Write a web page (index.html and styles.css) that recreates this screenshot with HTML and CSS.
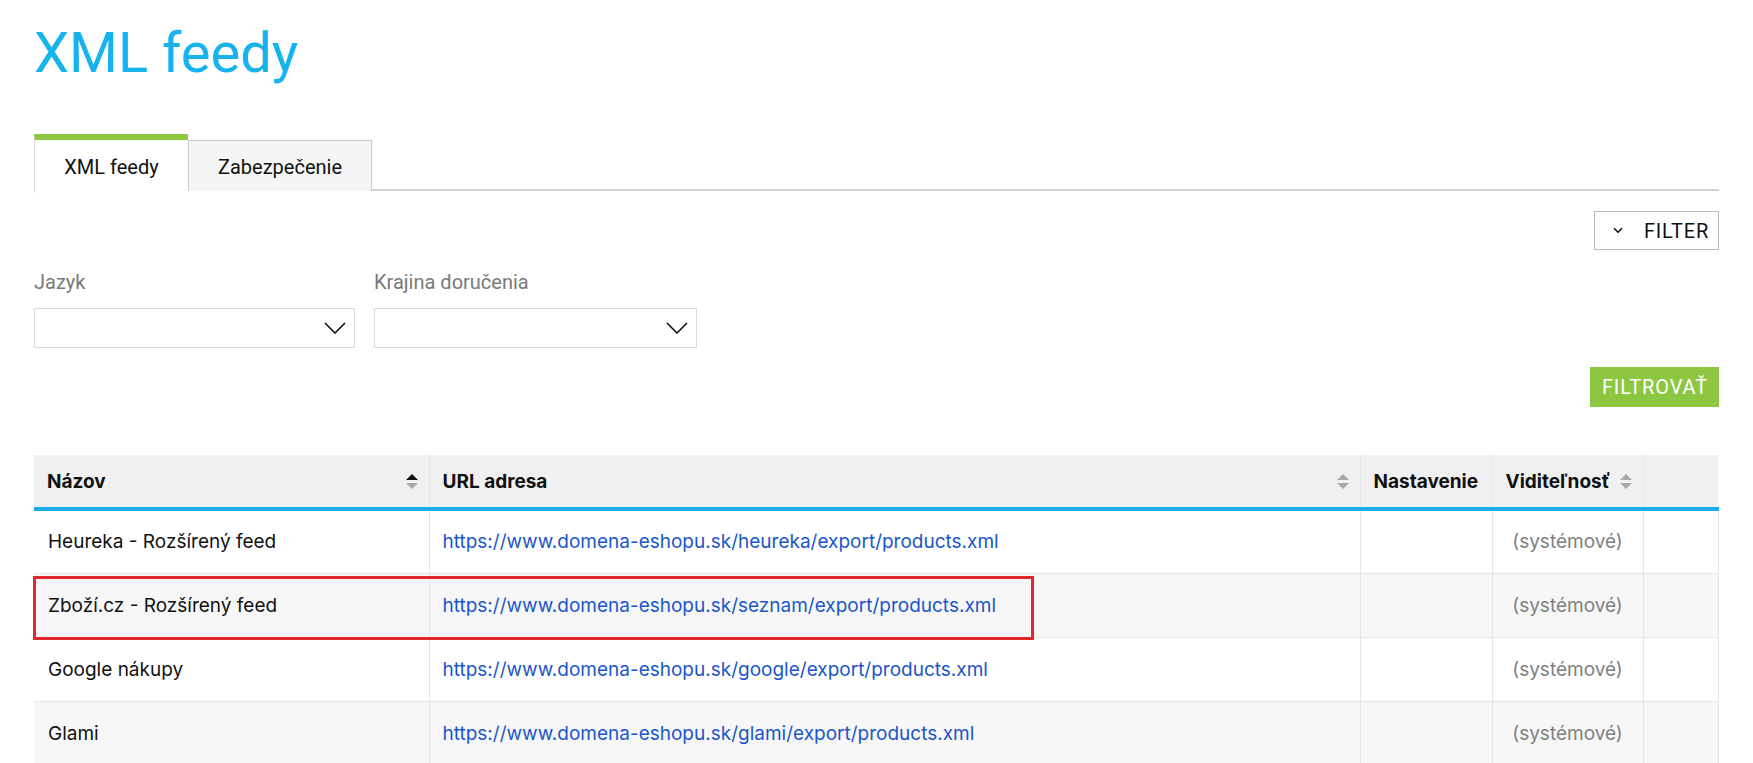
FILE: index.html
```html
<!DOCTYPE html>
<html lang="sk">
<head>
<meta charset="utf-8">
<title>XML feedy</title>
<link rel="stylesheet" href="styles.css">
</head>
<body>
<div class="page">
  <h1 class="title">XML feedy</h1>

  <div class="tabs">
    <div class="tab tab-active">XML feedy</div>
    <div class="tab">Zabezpečenie</div>
  </div>

  <div class="filter-toggle-row">
    <button class="filter-toggle">
      <svg class="filter-chev" width="10" height="7" viewBox="0 0 10 7"><path d="M1 1.2 L5 5.2 L9 1.2" fill="none" stroke="#111" stroke-width="1.6"/></svg>
      <span>FILTER</span>
    </button>
  </div>

  <div class="filters">
    <div class="field">
      <div class="field-label">Jazyk</div>
      <div class="select">
        <svg class="select-chev" width="22" height="12" viewBox="0 0 22 12"><path d="M1 1 L11 11 L21 1" fill="none" stroke="#111" stroke-width="1.6"/></svg>
      </div>
    </div>
    <div class="field">
      <div class="field-label">Krajina doručenia</div>
      <div class="select">
        <svg class="select-chev" width="22" height="12" viewBox="0 0 22 12"><path d="M1 1 L11 11 L21 1" fill="none" stroke="#111" stroke-width="1.6"/></svg>
      </div>
    </div>
  </div>

  <div class="apply-row">
    <button class="apply">FILTROVAŤ</button>
  </div>

  <div class="table-wrap">
    <table class="grid">
      <colgroup>
        <col class="c-name">
        <col class="c-url">
        <col class="c-set">
        <col class="c-vis">
        <col class="c-act">
      </colgroup>
      <thead>
        <tr>
          <th><div class="th-inner"><span>Názov</span><span class="sort sort-asc"><i class="up"></i><i class="down"></i></span></div></th>
          <th><div class="th-inner"><span>URL adresa</span><span class="sort"><i class="up"></i><i class="down"></i></span></div></th>
          <th><div class="th-inner"><span>Nastavenie</span></div></th>
          <th><div class="th-inner"><span>Viditeľnosť</span><span class="sort"><i class="up"></i><i class="down"></i></span></div></th>
          <th></th>
        </tr>
      </thead>
      <tbody>
        <tr>
          <td>Heureka - Rozšírený feed</td>
          <td><a class="link" href="#">https://www.domena-eshopu.sk/heureka/export/products.xml</a></td>
          <td></td>
          <td class="vis">(systémové)</td>
          <td></td>
        </tr>
        <tr>
          <td>Zboží.cz - Rozšírený feed</td>
          <td><a class="link" href="#">https://www.domena-eshopu.sk/seznam/export/products.xml</a></td>
          <td></td>
          <td class="vis">(systémové)</td>
          <td></td>
        </tr>
        <tr>
          <td>Google nákupy</td>
          <td><a class="link" href="#">https://www.domena-eshopu.sk/google/export/products.xml</a></td>
          <td></td>
          <td class="vis">(systémové)</td>
          <td></td>
        </tr>
        <tr>
          <td>Glami</td>
          <td><a class="link" href="#">https://www.domena-eshopu.sk/glami/export/products.xml</a></td>
          <td></td>
          <td class="vis">(systémové)</td>
          <td></td>
        </tr>
      </tbody>
    </table>
    <div class="highlight"></div>
  </div>
</div>
</body>
</html>
```
FILE: styles.css
```css
* { box-sizing: border-box; }
html, body { margin: 0; padding: 0; background: #fff; }
body {
  font-family: Inter, "Noto Sans", sans-serif;
  color: #111;
  overflow: hidden;
}
.page {
  padding: 0 34px 0 34px;
}
.title {
  margin: 0;
  padding-top: 25px;
  font-family: Roboto, sans-serif;
  font-weight: 400;
  font-size: 56px;
  line-height: 56px;
  color: #17b3ef;
}
.tabs {
  display: flex;
  margin-top: 53px;
  border-bottom: 2px solid #d2d2d2;
  height: 57px;
}
.tab {
  font-family: Roboto, sans-serif;
  font-size: 20px;
  line-height: 20px;
  display: flex;
  align-items: center;
  justify-content: center;
  margin-top: 6px;
  height: 51px;
  margin-bottom: -2px;
  background: #f5f5f5;
  border: 1px solid #c9c9c9;
  border-bottom: none;
  width: 184px;
  padding-top: 1px;
}
.tab-active {
  width: 154px;
  margin-top: 0;
  height: 59px;
  background: #fff;
  border: none;
  border-left: 1px solid #dcdcdc;
  border-top: 6px solid #8dc73f;
  padding-top: 0;
}
.filter-toggle-row {
  display: flex;
  justify-content: flex-end;
  margin-top: 20px;
}
.filter-toggle {
  display: flex;
  align-items: center;
  width: 125px;
  height: 39px;
  border: 1px solid #b9b9b9;
  background: #fff;
  font-family: Roboto, sans-serif;
  font-size: 20px;
  letter-spacing: 0.8px;
  color: #111;
  padding: 0 0 0 18px;
  gap: 21px;
}
.filters {
  display: flex;
  gap: 19px;
}
.field { width: 321px; }
.field + .field { width: 323px; }
.field-label {
  font-family: Roboto, sans-serif;
  font-size: 20px;
  color: #7a7a7a;
  height: 58px;
  padding-top: 22px;
  line-height: 20px;
}
.select {
  height: 40px;
  border: 1px solid #dadada;
  background: #fff;
  display: flex;
  align-items: center;
  justify-content: flex-end;
  padding-right: 8px;
}
.apply-row {
  display: flex;
  justify-content: flex-end;
  margin-top: 19px;
}
.apply {
  width: 129px;
  height: 40px;
  border: none;
  background: #8dc641;
  color: #fff;
  font-family: Roboto, sans-serif;
  font-size: 20px;
  letter-spacing: 0.9px;
  padding: 0 0 0 1px;
}
.table-wrap {
  position: relative;
  margin-top: 48px;
  width: 1684px;
}
.grid {
  width: 1684px;
  border-collapse: collapse;
  table-layout: fixed;
  font-size: 19px;
}
.c-name { width: 395px; }
.c-url { width: 931px; }
.c-set { width: 132px; }
.c-vis { width: 151px; }
.c-act { width: 75px; }
.grid th {
  background: #f0f0f0;
  height: 54px;
  text-align: left;
  font-weight: 700;
  padding: 0 11px 0 13px;
  border-left: 1px solid #e6e6e6;
  border-bottom: 4px solid #19aeea;
  white-space: nowrap;
}
.grid th:first-child { border-left: none; }
.th-inner {
  display: flex;
  align-items: center;
  justify-content: space-between;
}
.sort {
  display: inline-flex;
  flex-direction: column;
  gap: 3px;
  width: 12px;
  margin-left: 10px;
  flex: none;
}
.sort i {
  display: block;
  width: 0;
  height: 0;
  border-left: 6px solid transparent;
  border-right: 6px solid transparent;
}
.sort .up { border-bottom: 6px solid #a9a9a9; }
.sort .down { border-top: 6px solid #a9a9a9; }
.sort-asc .up { border-bottom-color: #111; }
.grid td {
  height: 64px;
  padding: 0 13px;
  border: 1px solid #e6e6e6;
  white-space: nowrap;
  overflow: hidden;
}
.grid td:first-child { border-left: none; padding-left: 14px; }
.grid tbody tr:nth-child(even) td { background: #f7f7f7; }
.link {
  color: #1b56c9;
  text-decoration: none;
}
.vis {
  text-align: center;
  color: #808080;
}
.highlight {
  position: absolute;
  left: -1px;
  top: 121px;
  width: 1001px;
  height: 64px;
  border: 3px solid #e3262b;
  pointer-events: none;
}
```
